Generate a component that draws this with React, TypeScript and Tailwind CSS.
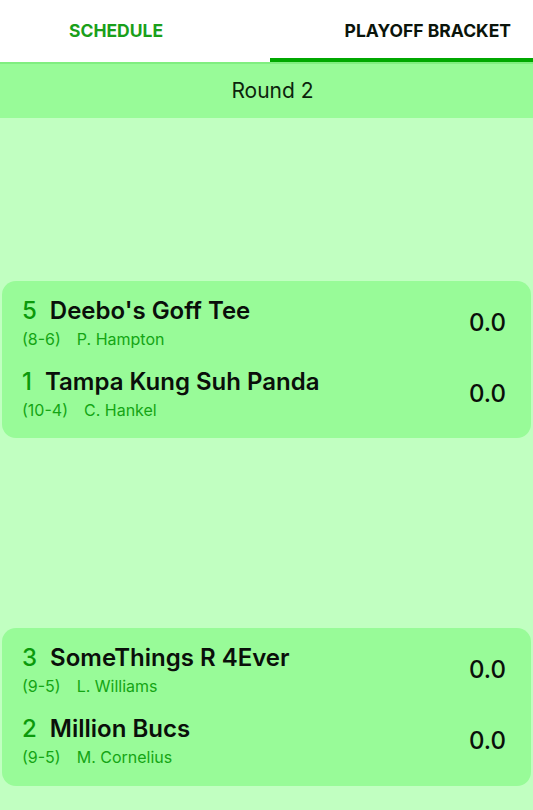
import React from "react";

type Team = { seed: string; name: string; record: string; owner: string; score: string };

const matches: Team[][] = [
  [
    { seed: "5", name: "Deebo's Goff Tee", record: "(8-6)", owner: "P. Hampton", score: "0.0" },
    { seed: "1", name: "Tampa Kung Suh Panda", record: "(10-4)", owner: "C. Hankel", score: "0.0" },
  ],
  [
    { seed: "3", name: "SomeThings R 4Ever", record: "(9-5)", owner: "L. Williams", score: "0.0" },
    { seed: "2", name: "Million Bucs", record: "(9-5)", owner: "M. Cornelius", score: "0.0" },
  ],
];

function TeamRow({ t }: { t: Team }) {
  return (
    <div className="flex items-center justify-between h-[71px]">
      <div className="flex flex-col">
        <div className="flex items-baseline text-[24px] leading-[30px] font-semibold">
          <span className="text-[#0b9a0b] font-medium">{t.seed}</span>
          <span className="ml-[13px] text-[#0a0f0a]">{t.name}</span>
        </div>
        <div className="flex text-[16px] leading-[22px] text-[#14a514] mt-[2px]">
          <span>{t.record}</span>
          <span className="ml-[16px]">{t.owner}</span>
        </div>
      </div>
      <div className="text-[24px] font-medium text-[#0a0f0a] mr-[5px]">{t.score}</div>
    </div>
  );
}

export default function App() {
  return (
    <div
      className="w-[533px] h-[810px] bg-[#c1ffc1] overflow-hidden"
      style={{ fontFamily: "Inter, Roboto, sans-serif" }}
    >
      <div className="relative flex h-[64px] bg-white">
        <div className="flex-1 flex items-center pl-[69px] pb-[1px] text-[17.5px] font-bold text-[#1a9f1a]">
          SCHEDULE
        </div>
        <div className="flex-1 flex items-center justify-end pr-[22px] pb-[1px] text-[17.5px] font-bold text-[#0a140a]">
          PLAYOFF BRACKET
        </div>
        <div className="absolute left-0 right-0 bottom-0 h-[2px] bg-[#80ee80]" />
        <div className="absolute left-[270px] right-0 bottom-[2px] h-[4px] bg-[#00a800]" />
      </div>
      <div className="h-[54px] bg-[#98fb98] flex items-center justify-center pl-[12px] text-[21px] text-[#0c240c]">
        Round 2
      </div>
      <div className="px-[2px]">
        <div className="mt-[163px] h-[157px] rounded-[14px] bg-[#98fb98] pl-[20px] pr-[20px] pt-[6px]">
          {matches[0].map((t) => (
            <TeamRow key={t.name} t={t} />
          ))}
        </div>
        <div className="mt-[190px] h-[158px] rounded-[14px] bg-[#98fb98] pl-[20px] pr-[20px] pt-[6px]">
          {matches[1].map((t) => (
            <TeamRow key={t.name} t={t} />
          ))}
        </div>
      </div>
    </div>
  );
}
